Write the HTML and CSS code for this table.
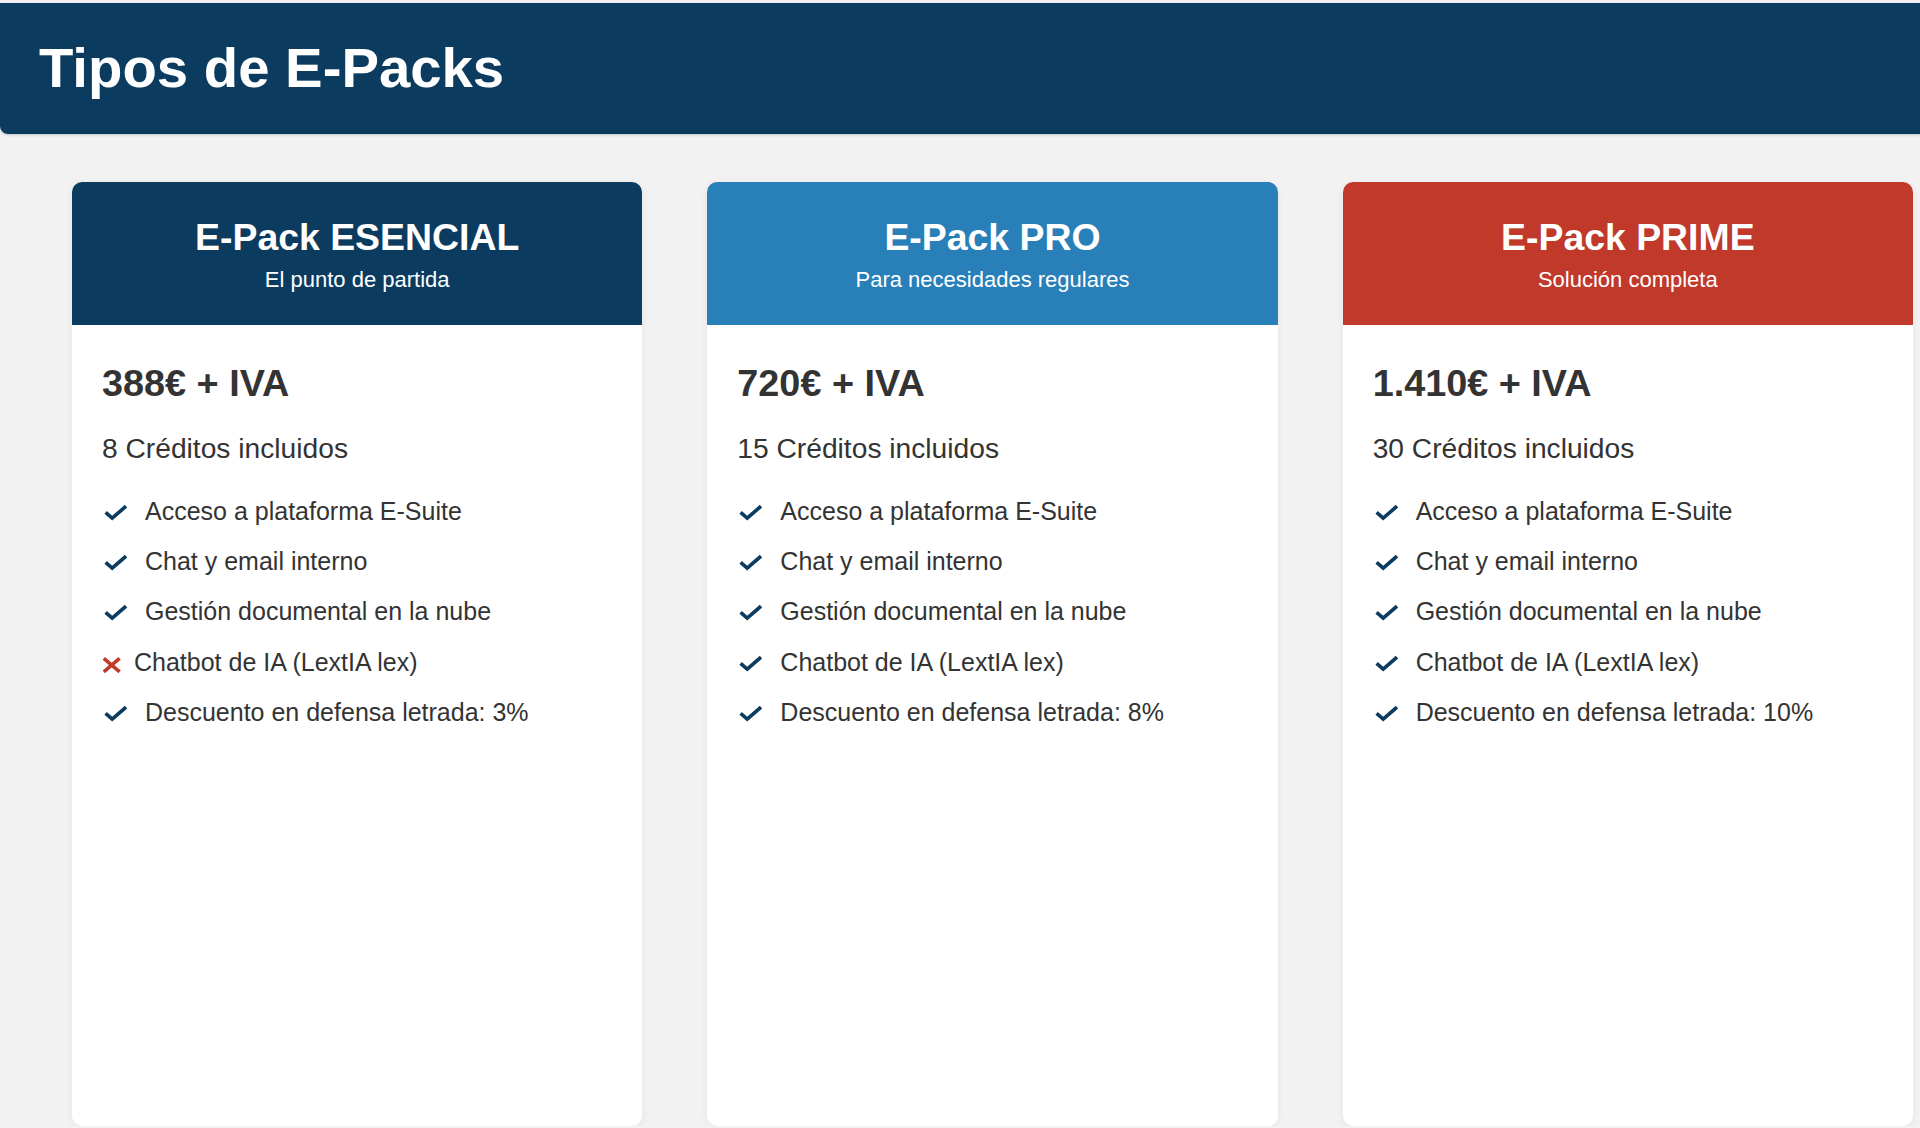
FILE: index.html
```html
<!DOCTYPE html>
<html lang="es">
<head>
<meta charset="utf-8">
<title>Tipos de E-Packs</title>
<link rel="stylesheet" href="styles.css">
</head>
<body>
<header class="page-header"><h1>Tipos de E-Packs</h1></header>
<main class="packs">
  <section class="pack pack-esencial">
    <div class="pack-head"><h2>E-Pack ESENCIAL</h2><p>El punto de partida</p></div>
    <div class="pack-body">
      <div class="price">388€ + IVA</div>
      <div class="credits">8 Créditos incluidos</div>
      <ul class="features">
        <li><svg class="ico ico-check" viewBox="0 0 25 20"><polyline points="3.6,11.4 10.2,17.2 24,5.2"/></svg><span>Acceso a plataforma E-Suite</span></li>
        <li><svg class="ico ico-check" viewBox="0 0 25 20"><polyline points="3.6,11.4 10.2,17.2 24,5.2"/></svg><span>Chat y email interno</span></li>
        <li><svg class="ico ico-check" viewBox="0 0 25 20"><polyline points="3.6,11.4 10.2,17.2 24,5.2"/></svg><span>Gestión documental en la nube</span></li>
        <li><svg class="ico ico-x" viewBox="0 0 19 22"><path d="M1.8 7.4 L17.6 20.8 M17.6 7.4 L1.8 20.8"/></svg><span>Chatbot de IA (LextIA lex)</span></li>
        <li><svg class="ico ico-check" viewBox="0 0 25 20"><polyline points="3.6,11.4 10.2,17.2 24,5.2"/></svg><span>Descuento en defensa letrada: 3%</span></li>
      </ul>
    </div>
  </section>
  <section class="pack pack-pro">
    <div class="pack-head"><h2>E-Pack PRO</h2><p>Para necesidades regulares</p></div>
    <div class="pack-body">
      <div class="price">720€ + IVA</div>
      <div class="credits">15 Créditos incluidos</div>
      <ul class="features">
        <li><svg class="ico ico-check" viewBox="0 0 25 20"><polyline points="3.6,11.4 10.2,17.2 24,5.2"/></svg><span>Acceso a plataforma E-Suite</span></li>
        <li><svg class="ico ico-check" viewBox="0 0 25 20"><polyline points="3.6,11.4 10.2,17.2 24,5.2"/></svg><span>Chat y email interno</span></li>
        <li><svg class="ico ico-check" viewBox="0 0 25 20"><polyline points="3.6,11.4 10.2,17.2 24,5.2"/></svg><span>Gestión documental en la nube</span></li>
        <li><svg class="ico ico-check" viewBox="0 0 25 20"><polyline points="3.6,11.4 10.2,17.2 24,5.2"/></svg><span>Chatbot de IA (LextIA lex)</span></li>
        <li><svg class="ico ico-check" viewBox="0 0 25 20"><polyline points="3.6,11.4 10.2,17.2 24,5.2"/></svg><span>Descuento en defensa letrada: 8%</span></li>
      </ul>
    </div>
  </section>
  <section class="pack pack-prime">
    <div class="pack-head"><h2>E-Pack PRIME</h2><p>Solución completa</p></div>
    <div class="pack-body">
      <div class="price">1.410€ + IVA</div>
      <div class="credits">30 Créditos incluidos</div>
      <ul class="features">
        <li><svg class="ico ico-check" viewBox="0 0 25 20"><polyline points="3.6,11.4 10.2,17.2 24,5.2"/></svg><span>Acceso a plataforma E-Suite</span></li>
        <li><svg class="ico ico-check" viewBox="0 0 25 20"><polyline points="3.6,11.4 10.2,17.2 24,5.2"/></svg><span>Chat y email interno</span></li>
        <li><svg class="ico ico-check" viewBox="0 0 25 20"><polyline points="3.6,11.4 10.2,17.2 24,5.2"/></svg><span>Gestión documental en la nube</span></li>
        <li><svg class="ico ico-check" viewBox="0 0 25 20"><polyline points="3.6,11.4 10.2,17.2 24,5.2"/></svg><span>Chatbot de IA (LextIA lex)</span></li>
        <li><svg class="ico ico-check" viewBox="0 0 25 20"><polyline points="3.6,11.4 10.2,17.2 24,5.2"/></svg><span>Descuento en defensa letrada: 10%</span></li>
      </ul>
    </div>
  </section>
</main>
</body>
</html>
```

FILE: styles.css
```css
html, body {
  margin: 0;
  padding: 0;
}

body {
  background: #f2f2f2;
  font-family: "Liberation Sans", Arial, sans-serif;
  color: #333333;
  overflow: hidden;
}

.page-header {
  margin-top: 3px;
  height: 131px;
  box-sizing: border-box;
  padding-left: 39px;
  display: flex;
  align-items: center;
  background: #0b3c5f;
  border-bottom-left-radius: 8px;
  box-shadow: 0 1px 3px rgba(0, 0, 0, 0.18);
}

.page-header h1 {
  margin: 0;
  font-size: 56.3px;
  line-height: 1;
  font-weight: 700;
  color: #ffffff;
}

.packs {
  display: grid;
  grid-template-columns: repeat(3, 1fr);
  column-gap: 65px;
  width: 1841px;
  margin: 48px 0 0 72px;
}

.pack {
  height: 944px;
  background: #ffffff;
  border-radius: 10px;
  overflow: hidden;
  box-shadow: 0 2px 8px rgba(0, 0, 0, 0.06);
}

.pack-head {
  height: 143px;
  box-sizing: border-box;
  padding-top: 33px;
  text-align: center;
  color: #ffffff;
}

.pack-esencial .pack-head { background: #0b3c5f; }
.pack-pro .pack-head { background: #2980b9; }
.pack-prime .pack-head { background: #c0392b; }

.pack-head h2 {
  margin: 0;
  font-size: 37.4px;
  line-height: 44px;
  font-weight: 700;
}

.pack-head p {
  margin: 8px 0 0;
  font-size: 22px;
  line-height: 26px;
}

.pack-body {
  padding: 36px 30px 0;
}

.price {
  font-size: 37.8px;
  line-height: 44px;
  font-weight: 700;
  color: #333333;
}

.credits {
  margin-top: 26px;
  font-size: 28.2px;
  line-height: 34px;
}

.features {
  list-style: none;
  margin: 21px 0 0;
  padding: 0;
}

.features li {
  display: flex;
  align-items: center;
  height: 50.2px;
  font-size: 25px;
  line-height: 50px;
  white-space: nowrap;
}

.ico {
  flex: none;
  fill: none;
  stroke-linecap: butt;
}

.ico-check {
  width: 25px;
  height: 20px;
  margin-right: 18px;
  stroke: #0b3c5f;
  stroke-width: 3.6;
  stroke-linejoin: miter;
}

.ico-x {
  width: 19px;
  height: 22px;
  margin-right: 13px;
  stroke: #c0392b;
  stroke-width: 3.6;
}
```
